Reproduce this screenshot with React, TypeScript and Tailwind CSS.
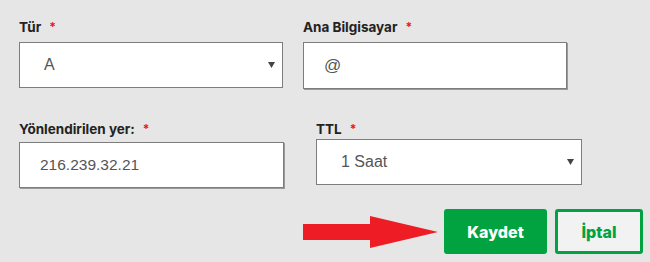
const labelFont = { fontFamily: 'Inter, Lato, "Noto Sans", sans-serif' }

function Label({ text }: { text: string }) {
  return (
    <div
      className="flex h-[18px] items-center text-[13.5px] font-bold leading-[18px] text-[#222]"
      style={labelFont}
    >
      <span>{text}</span>
      <span className="ml-[8px] text-[12px] text-[#e8141c]">*</span>
    </div>
  )
}

function Caret() {
  return (
    <svg width="7" height="6" viewBox="0 0 7 6" className="shrink-0">
      <path d="M0 0 H7 L3.5 6 Z" fill="#444" />
    </svg>
  )
}

function SelectBox({ value, className = '' }: { value: string; className?: string }) {
  return (
    <div
      className={`flex h-[46px] items-center justify-between border border-[#7d7d7d] bg-white pl-[24px] pr-[7px] text-[16px] text-[#555] ${className}`}
      style={{ fontFamily: '"Liberation Sans", Arial, sans-serif' }}
    >
      <span>{value}</span>
      <Caret />
    </div>
  )
}

function TextBox({ value, className = '' }: { value: string; className?: string }) {
  return (
    <div
      className={`flex h-[46px] items-center border border-[#7d7d7d] bg-white pl-[20px] text-[15.5px] text-[#555] shadow-[1px_1px_0_#9a9a9a] ${className}`}
      style={{ fontFamily: '"Liberation Sans", Arial, sans-serif' }}
    >
      <span>{value}</span>
    </div>
  )
}

function Arrow() {
  return (
    <svg width="136" height="32" viewBox="0 0 136 32" className="shrink-0">
      <path d="M0 8 H67 V0 L135 16 L67 32 V24 H0 Z" fill="#ee1c25" />
    </svg>
  )
}

export default function App() {
  return (
    <div className="h-[262px] w-[650px] overflow-hidden bg-[#e6e6e6] pt-[18px]">
      {/* satır 1 */}
      <div className="flex gap-[20px] pl-[19px]">
        <div className="w-[264px]">
          <Label text="Tür" />
          <SelectBox value="A" className="mt-[6px]" />
        </div>
        <div className="w-[264px]">
          <Label text="Ana Bilgisayar" />
          <TextBox value="@" className="mt-[6px] h-[47px] text-[17px]" />
        </div>
      </div>

      {/* satır 2 */}
      <div className="mt-[31px] flex gap-[32px] pl-[19px]">
        <div className="w-[265px]">
          <Label text="Yönlendirilen yer:" />
          <TextBox value="216.239.32.21" className="mt-[4px]" />
        </div>
        <div className="w-[266px]">
          <Label text="TTL" />
          <SelectBox value="1 Saat" className="mt-[1px]" />
        </div>
      </div>

      {/* butonlar */}
      <div className="mt-[21px] flex items-center justify-end pr-[7px]">
        <Arrow />
        <button
          className="ml-[5px] h-[45px] w-[103px] rounded-[3px] bg-[#00a33f] text-[16px] font-extrabold text-white"
          style={labelFont}
        >
          Kaydet
        </button>
        <button
          className="ml-[8px] h-[45px] w-[88px] rounded-[3px] border-[3px] border-[#00a33f] bg-[#f2f2f2] text-[16px] font-extrabold text-[#00a33f]"
          style={labelFont}
        >
          İptal
        </button>
      </div>
    </div>
  )
}
